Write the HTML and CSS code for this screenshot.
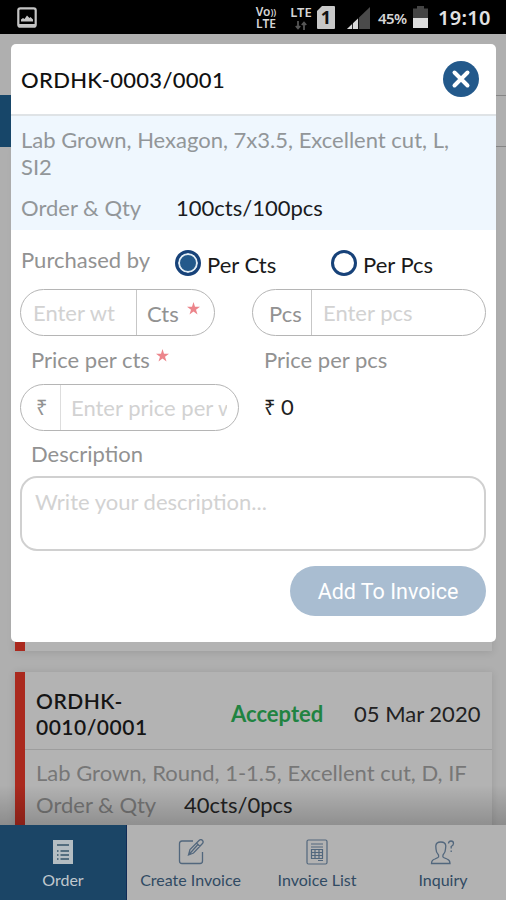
FILE: index.html
```html
<!DOCTYPE html>
<html lang="en">
<head>
<meta charset="utf-8">
<meta name="viewport" content="width=device-width">
<title>Orders</title>
<link rel="stylesheet" href="styles.css">
</head>
<body>
<div class="phone">
  <header class="status">
    <svg class="status-photo" width="20" height="21" viewBox="0 0 20 21"><rect x="1.3" y="1.3" width="17.4" height="18.4" rx="2" fill="none" stroke="#c4c4c4" stroke-width="2.2"/><path d="M1 17h18v3H1zM4 14.5v-2l2-1.5 1.5 1L10 8.5l2.500 2.500 1-1 2.500 2.500v2z" fill="#c4c4c4"/></svg>
    <div class="volte"><span>Vo<i>))</i></span><span>LTE</span></div>
    <div class="lte"><span>LTE</span><svg width="12" height="9" viewBox="0 0 12 9" fill="none" stroke="#555" stroke-width="1.800"><path d="M3 0v7M.8 5L3 7.500 5.200 5M9 9V2M6.800 4L9 1.500 11.200 4"/></svg></div>
    <div class="sim">1</div>
    <svg class="signal" width="23" height="22" viewBox="0 0 23 22"><path d="M0 22L23 0v22z" fill="#4a4a4a"/><path d="M0 22L11 11.500V22z" fill="#d8d8d8"/><path d="M5.500 16v6M11.500 9v13" stroke="#000" stroke-width=".8"/></svg>
    <span class="percent">45%</span>
    <svg class="battery" width="15" height="22" viewBox="0 0 15 22"><path d="M4 0h7v2.500h4V12H0V2.500h4z" fill="#444"/><path d="M0 12h15v10H0z" fill="#dcdcdc"/></svg>
    <time class="clock">19:10</time>
  </header>

  <main class="page">
    <div class="filters"><span class="filter-active"></span></div>
    <div class="orders">
      <article class="order order-first"></article>
      <article class="order">
        <div class="order-head">
          <h2>ORDHK-0010/0001</h2>
          <strong>Accepted</strong>
          <time>05 Mar 2020</time>
        </div>
        <div class="order-body">
          <p class="order-spec">Lab Grown, Round, 1-1.5, Excellent cut, D, IF</p>
          <p class="order-qty"><span>Order &amp; Qty</span><b>40cts/0pcs</b></p>
        </div>
      </article>
    </div>
    <div class="fade"></div>
  </main>

  <nav class="tabs">
    <a class="tab tab-active"><svg width="22" height="26" viewBox="0 0 22 26"><path d="M1 1h20v24H1z" fill="#b4bdc2"/><path d="M5 6h12M8.500 12H17M8.500 16H17M8.500 20H17M5 12h1.500M5 16h1.500M5 20h1.500" stroke="#345469" stroke-width="1.300"/></svg><span>Order</span></a>
    <a class="tab tab-create"><svg width="26" height="26" viewBox="0 0 26 26" fill="none" stroke="#52677d" stroke-width="1.300"><path d="M15 2H4Q1.500 2 1.500 4.500V22Q1.500 24.500 4 24.500H22Q24.500 24.500 24.500 22V13"/><path d="M10.500 16L12 10.500 21 1.500Q23-.2 24.500 1.500T24 5L15.500 14zM10.500 16l9-10M18.500 4l3.500 3.500"/></svg><span>Create Invoice</span></a>
    <a class="tab tab-list"><svg width="22" height="26" viewBox="0 0 22 26" fill="none" stroke="#52677d" stroke-width="1.200"><rect x="1" y="1" width="20" height="24" rx="1.500"/><path d="M5 5h12M5 8h12M5.500 10.500h11v9h-11zM5.500 13.500h11M5.500 16.500h11M9 10.500v9M13 10.500v9M12 21.500h5"/></svg><span>Invoice List</span></a>
    <a class="tab tab-inquiry"><svg width="26" height="26" viewBox="0 0 26 26" fill="none" stroke="#52677d" stroke-width="1.300"><path d="M1.500 24.500Q1.500 21 5 20L8 18.500Q9 18 8.500 16Q6 13.500 6 10L5.800 7Q6 3 10.800 3T15.800 7L15.500 10Q15.500 13.500 13 16Q12.500 18 13.500 18.500L17 20Q20 21 20 24.500z"/><path d="M18.500 4.500Q18.500 2 21 2T23.500 4.500Q23.500 6.300 21.200 7.500V9.500M21.200 11.500V13"/></svg><span>Inquiry</span></a>
  </nav>

  <section class="modal">
    <header class="modal-head">
      <h1>ORDHK-0003/0001</h1>
      <button class="close" aria-label="Close"><svg width="36" height="36" viewBox="0 0 36 36"><circle cx="18" cy="18" r="18" fill="#23598b"/><path d="M11.500 11.500l13 13M24.500 11.500l-13 13" stroke="#fff" stroke-width="4" stroke-linecap="round"/></svg></button>
    </header>
    <div class="info">
      <p class="spec">Lab Grown, Hexagon, 7x3.5, Excellent cut, L, SI2</p>
      <p class="qty"><span>Order &amp; Qty</span><b>100cts/100pcs</b></p>
    </div>
    <form class="form">
      <div class="purchase">
        <span class="purchase-label">Purchased by</span>
        <label class="choice choice-cts"><i class="radio radio-on"></i><span>Per Cts</span></label>
        <label class="choice"><i class="radio"></i><span>Per Pcs</span></label>
      </div>
      <div class="amounts">
        <div class="field field-wt"><span class="hint">Enter wt</span><span class="unit">Cts <svg class="star" width="13" height="13" viewBox="0 0 13 13"><path d="M6.500 0L8 4.700H13L9 7.700 10.500 12.500 6.500 9.600 2.500 12.500 4 7.700 0 4.700H5z" fill="#ec858b"/></svg></span></div>
        <div class="field field-pcs"><span class="unit">Pcs</span><span class="hint">Enter pcs</span></div>
      </div>
      <div class="prices">
        <div class="price">
          <span class="label">Price per cts <svg class="star" width="13" height="13" viewBox="0 0 13 13"><path d="M6.500 0L8 4.700H13L9 7.700 10.500 12.500 6.500 9.600 2.500 12.500 4 7.700 0 4.700H5z" fill="#ec858b"/></svg></span>
          <div class="field field-price"><span class="unit">₹</span><span class="hint"><span>Enter price per wt</span></span></div>
        </div>
        <div class="price">
          <span class="label">Price per pcs</span>
          <span class="total"><i>₹</i> 0</span>
        </div>
      </div>
      <span class="label label-desc">Description</span>
      <div class="textarea">Write your description...</div>
      <button class="submit" type="button">Add To Invoice</button>
    </form>
  </section>
</div>
</body>
</html>
```
FILE: styles.css
```css
* { box-sizing: border-box; }
body { margin: 0; font-family: Lato, sans-serif; font-size: 22px; color: #111; }
h1, h2, p { margin: 0; font-weight: 500; }
b { font-weight: 400; }
i { font-style: normal; }
svg { display: block; flex: none; }
button { border: 0; padding: 0; }
.phone { position: relative; width: 506px; height: 900px; display: flex; flex-direction: column; overflow: hidden; background: #afafaf; }

/* status bar */
.status { height: 34px; flex: none; background: #000; color: #d6d6d6; display: flex; align-items: flex-start; padding: 7px 0 0 17px; font-family: "Noto Sans", sans-serif; font-weight: 600; }
.volte { margin: -1px 0 0 216px; width: 26px; font-size: 12px; line-height: 12px; display: flex; flex-direction: column; align-items: center; white-space: nowrap; }
.volte i { font-size: 9px; vertical-align: 1px; }
.lte { margin: -2px 0 0 9px; width: 26px; font-size: 13px; line-height: 14px; display: flex; flex-direction: column; align-items: center; }
.lte svg { margin-top: 2px; }
.sim { margin: -1px 0 0 3px; width: 18px; height: 23px; border-radius: 1px; background: #c8c8c8; clip-path: polygon(5px 0, 100% 0, 100% 100%, 0 100%, 0 5px); color: #111; font-size: 18px; line-height: 23px; text-align: center; font-weight: 700; }
.signal { margin-left: 12px; }
.percent { margin-left: 8px; width: 30px; font-size: 15px; line-height: 22px; letter-spacing: -.6px; }
.battery { margin-left: 5px; margin-top: -1px; }
.clock { margin-left: 10px; font-size: 20px; line-height: 22px; color: #e2e2e2; letter-spacing: .3px; }

/* dimmed page */
.page { flex: 1; min-height: 0; position: relative; display: flex; flex-direction: column; overflow: hidden; }
.filters { margin-top: 61px; height: 52px; flex: none; border: 1px solid #858585; border-width: 1px 0; }
.filter-active { display: block; width: 126px; height: 52px; margin-top: -1px; background: #174669; }
.orders { padding: 0 14px 0 15px; display: flex; flex-direction: column; gap: 21px; }
.order { border-left: 10px solid #aa291e; background: #b3b3b3; box-shadow: 0 1px 8px rgba(0,0,0,.12); height: 170px; flex: none; }
.order-first { height: 504px; }
.order-head { height: 78px; border-bottom: 1px solid #9d9d9d; display: flex; align-items: center; padding: 6px 10px 0 11px; }
.order-head h2 { width: 155px; margin-right: 40px; font-size: 21px; line-height: 26px; letter-spacing: .5px; font-weight: 600; color: #151515; }
.order-head strong { color: #218341; font-size: 22px; font-weight: 700; width: 123px; }
.order-head time { font-size: 22px; white-space: nowrap; color: #222; }
.order-body { padding: 9px 11px; color: #777; }
.order-spec, .order-qty { font-weight: 400; line-height: 28px; white-space: nowrap; }
.order-qty { margin-top: 4px; display: flex; }
.order-qty span { width: 148px; }
.order-qty b { color: #222; }
.fade { position: absolute; left: 0; right: 0; bottom: 0; height: 40px; background: linear-gradient(transparent, rgba(0,0,0,.2)); }

/* bottom navigation */
.tabs { height: 75px; flex: none; background: #b2b2b2; display: grid; grid-template-columns: 127px 127px 126px 126px; }
.tab { display: flex; flex-direction: column; align-items: center; padding-top: 14px; font-size: 16px; color: #304a63; white-space: nowrap; }
.tab span { margin-top: 5px; line-height: 20px; }
.tab-active { background: #1b4566; color: #c0c8ce; border-right: 1px solid #102b57; }

/* order dialog */
.modal { position: absolute; left: 11px; top: 44px; width: 485px; height: 598px; border-radius: 5px; background: #fff; overflow: hidden; display: flex; flex-direction: column; }
.modal-head { height: 72px; border-bottom: 2px solid #dfe3e6; display: flex; align-items: center; justify-content: space-between; padding: 0 17px 0 10px; }
.modal-head h1 { font-size: 22px; letter-spacing: .3px; }
.close { background: none; }
.info { height: 114px; background: #eff7fe; padding: 10px 10px 0; color: #929699; }
.spec { line-height: 27px; font-weight: 400; width: 445px; }
.qty { margin-top: 14px; display: flex; line-height: 28px; font-weight: 400; }
.qty span { width: 155px; }
.qty b { color: #1a1c1e; }
.form { padding: 0 10px 0 9px; display: flex; flex-direction: column; color: #929292; }
.purchase { height: 59px; display: flex; padding-left: 1px; line-height: 28px; }
.purchase-label { width: 154px; padding-top: 16px; }
.choice { display: flex; padding-top: 21px; color: #1a1a1a; }
.choice-cts { width: 156px; }
.radio { width: 26px; height: 26px; margin: -1px 6px 0 0; border: 3px solid #174279; border-radius: 50%; }
.radio-on { background: #23598b; box-shadow: inset 0 0 0 2px #e3edf5; }
.amounts { display: flex; justify-content: space-between; }
.field { height: 47px; border: 1px solid #b5b5b5; border-radius: 24px; display: flex; line-height: 46px; white-space: nowrap; }
.field .hint { color: #d2d2d2; }
.field-wt { width: 195px; }
.field-wt .hint { width: 116px; padding-left: 12px; border-right: 1px solid #c7c7c7; }
.field-wt .unit { padding-left: 10px; display: flex; gap: 8px; line-height: 48px; }
.field-wt .star { margin-top: 12px; }
.field-pcs { width: 234px; }
.field-pcs .unit { width: 59px; padding-left: 16px; border-right: 1px solid #c7c7c7; line-height: 48px; }
.field-pcs .hint { padding-left: 11px; }
.prices { display: flex; }
.price { width: 248px; }
.price + .price { padding-left: 0; }
.price .label { display: flex; gap: 6px; padding-left: 11px; height: 48px; line-height: 47px; }
.price .star { margin-top: 13px; }
.field-price { width: 219px; }
.field-price .unit { width: 40px; padding-left: 15px; border-right: 1px solid #ddd; font-family: "Noto Sans", sans-serif; font-size: 20px; }
.field-price .hint { padding-left: 10px; width: 166px; }
.field-price .hint span { display: block; overflow: hidden; }
.total { display: block; padding-left: 11px; line-height: 46px; color: #222; }
.total i { font-family: "Noto Sans", sans-serif; font-size: 20px; }
.label-desc { padding-left: 11px; height: 45px; line-height: 46px; }
.textarea { height: 75px; border: 2px solid #d0d0d0; border-radius: 17px; padding: 10px 13px; color: #d2d2d2; line-height: 28px; }
.submit { align-self: flex-end; width: 196px; height: 50px; margin-top: 15px; border-radius: 25px; background: #a9bdd1; color: #fff; font: 400 21.500px Roboto, sans-serif; }
```
